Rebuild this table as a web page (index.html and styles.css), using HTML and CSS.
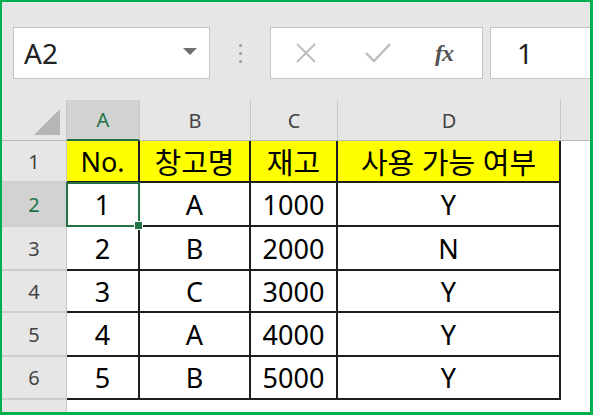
FILE: index.html
```html
<!DOCTYPE html>
<html lang="ko">
<head>
<meta charset="utf-8">
<link rel="stylesheet" href="styles.css">
</head>
<body>
<div class="frame">
  <div class="toolbar">
    <div class="namebox">
      <span class="nb-text">A2</span>
      <svg class="nb-arrow" width="14" height="8" viewBox="0 0 14 8"><path d="M0 0H14L7 7Z" fill="#6f6f6f"/></svg>
    </div>
    <div class="grip"><i></i><i></i><i></i></div>
    <div class="fbtns">
      <svg class="ic-x" width="22" height="22" viewBox="0 0 22 22"><path d="M2 2L20 20M20 2L2 20" stroke="#bdbdbd" stroke-width="2" fill="none"/></svg>
      <svg class="ic-check" width="26" height="22" viewBox="0 0 26 22"><path d="M1 11L9 19L25 2" stroke="#bdbdbd" stroke-width="2.4" fill="none"/></svg>
      <span class="fx">fx</span>
    </div>
    <div class="finput">1</div>
  </div>
  <div class="sheet">
    <div class="corner"><svg width="26" height="26" viewBox="0 0 26 26"><path d="M26 0V26H0Z" fill="#b5b5b5"/></svg></div>
    <div class="ch sel">A</div>
    <div class="ch">B</div>
    <div class="ch">C</div>
    <div class="ch">D</div>
    <div class="ch last"></div>

    <div class="rh">1</div>
    <div class="c y">No.</div>
    <div class="c y k">창고명</div>
    <div class="c y k">재고</div>
    <div class="c y k">사용 가능 여부</div>
    <div class="e"></div>

    <div class="rh sel">2</div>
    <div class="c active">1</div>
    <div class="c">A</div>
    <div class="c">1000</div>
    <div class="c">Y</div>
    <div class="e"></div>

    <div class="rh">3</div>
    <div class="c">2</div>
    <div class="c">B</div>
    <div class="c">2000</div>
    <div class="c">N</div>
    <div class="e"></div>

    <div class="rh">4</div>
    <div class="c">3</div>
    <div class="c">C</div>
    <div class="c">3000</div>
    <div class="c">Y</div>
    <div class="e"></div>

    <div class="rh">5</div>
    <div class="c">4</div>
    <div class="c">A</div>
    <div class="c">4000</div>
    <div class="c">Y</div>
    <div class="e"></div>

    <div class="rh">6</div>
    <div class="c">5</div>
    <div class="c">B</div>
    <div class="c">5000</div>
    <div class="c">Y</div>
    <div class="e"></div>

    <div class="rh"></div>
    <div class="e"></div>
    <div class="e"></div>
    <div class="e"></div>
    <div class="e"></div>
    <div class="e"></div>
  </div>
</div>
</body>
</html>
```

FILE: styles.css
```css
html, body {
  margin: 0;
  padding: 0;
  background: #ffffff;
}

.frame {
  width: 593px;
  height: 415px;
  box-sizing: border-box;
  border-style: solid;
  border-color: #00b050;
  border-width: 2px 3px 3px 2px;
  overflow: hidden;
  font-family: "Noto Sans", "Noto Sans CJK KR", sans-serif;
  background: #ffffff;
}

.toolbar {
  height: 98px;
  box-sizing: border-box;
  background: #e6e6e6;
  padding: 25px 0 0 11px;
  display: flex;
  align-items: flex-start;
}

.namebox {
  width: 197px;
  height: 52px;
  box-sizing: border-box;
  background: #fff;
  border: 1px solid #c6c6c6;
  display: flex;
  align-items: center;
  justify-content: space-between;
  padding: 0 12px 0 10px;
}

.nb-text {
  font-size: 28px;
  color: #222;
}

.nb-arrow {
  margin-top: -3px;
}

.grip {
  width: 60px;
  height: 52px;
  display: flex;
  flex-direction: column;
  align-items: center;
  justify-content: center;
  gap: 5px;
}

.grip i {
  display: block;
  width: 3px;
  height: 3px;
  border-radius: 50%;
  background: #9a9a9a;
}

.fbtns {
  width: 213px;
  height: 52px;
  box-sizing: border-box;
  background: #fff;
  border: 1px solid #c6c6c6;
  display: flex;
  align-items: center;
  padding-left: 24px;
}

.ic-check {
  margin-left: 48px;
}

.fx {
  margin-left: 44px;
  font-family: "Liberation Serif", serif;
  font-style: italic;
  font-weight: bold;
  font-size: 24px;
  color: #555;
  letter-spacing: -1px;
}

.finput {
  margin-left: 7px;
  flex: 1;
  height: 52px;
  box-sizing: border-box;
  background: #fff;
  border: 1px solid #c6c6c6;
  border-right: none;
  font-size: 28px;
  color: #222;
  padding-left: 26px;
  display: flex;
  align-items: center;
}

.sheet {
  display: grid;
  grid-template-columns: 65px 73px 111px 87px 223px 1fr;
  grid-template-rows: 41px 42px 44px 44px 42px 44px 43px 20px;
}

.corner {
  background: #e6e6e6;
  border-right: 1px solid #c6c6c6;
  border-bottom: 1px solid #b8b8b8;
  display: flex;
  align-items: flex-end;
  justify-content: flex-end;
  padding: 0 6px 5px 0;
  box-sizing: border-box;
}

.ch {
  background: #e6e6e6;
  border-right: 1px solid #c6c6c6;
  border-bottom: 1px solid #b8b8b8;
  box-sizing: border-box;
  font-size: 20px;
  color: #444;
  display: flex;
  align-items: center;
  justify-content: center;
}

.ch.sel {
  background: #d2d2d2;
  color: #217346;
  border-bottom: 2px solid #217346;
}

.ch.last {
  border-right: none;
}

.rh {
  background: #e6e6e6;
  border-right: 1px solid #c6c6c6;
  border-bottom: 2px solid #cdcdcd;
  box-sizing: border-box;
  font-size: 20px;
  color: #444;
  display: flex;
  align-items: center;
  justify-content: center;
}

.rh.sel {
  background: #d2d2d2;
  color: #217346;
}

.c {
  border-right: 2px solid #1e1e1e;
  border-bottom: 2px solid #1e1e1e;
  box-sizing: border-box;
  font-size: 27px;
  color: #000;
  display: flex;
  align-items: center;
  justify-content: center;
  background: #fff;
}

.c.k {
  font-size: 29px;
}

.c.y {
  background: #ffff00;
}

.c.active {
  position: relative;
}

.c.active::after {
  content: "";
  position: absolute;
  left: -1px;
  top: -1px;
  right: -2px;
  bottom: -2px;
  border: 2px solid #217346;
}

.c.active::before {
  content: "";
  position: absolute;
  right: -5px;
  bottom: -5px;
  width: 7px;
  height: 7px;
  background: #217346;
  border: 1px solid #fff;
  z-index: 2;
}

.e {
  background: #fff;
}
```
